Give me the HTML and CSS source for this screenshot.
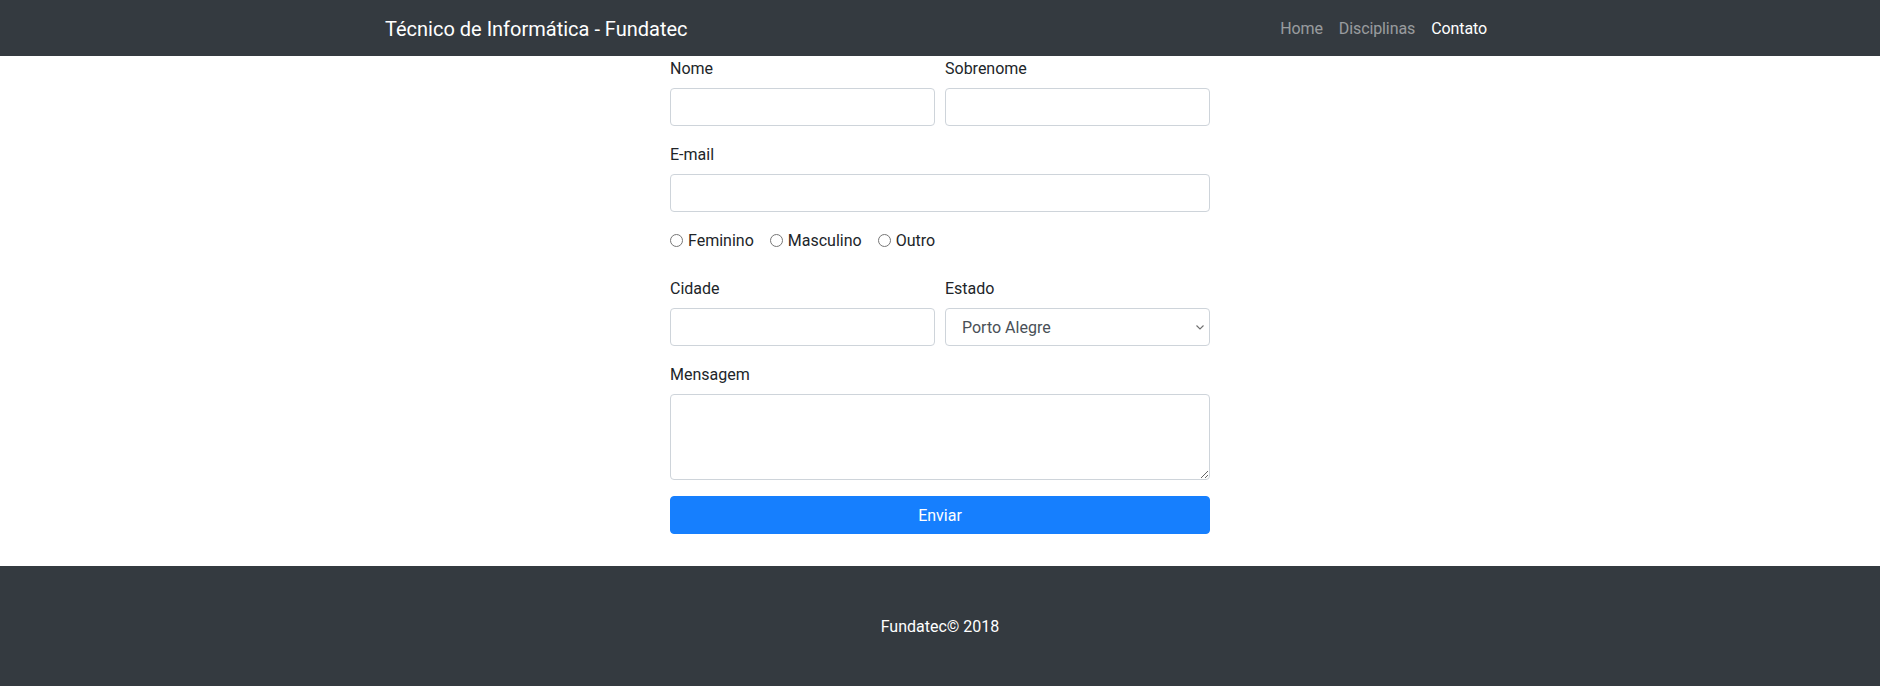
FILE: index.html
```html
<!DOCTYPE html>
<html lang="pt-BR">
<head>
<meta charset="utf-8">
<title>Contato - Técnico de Informática - Fundatec</title>
<link rel="stylesheet" href="styles.css">
</head>
<body>
<nav class="navbar">
  <div class="container nav-inner">
    <a class="brand" href="#">Técnico de Informática - Fundatec</a>
    <ul class="nav-links">
      <li><a class="nav-link" href="#">Home</a></li>
      <li><a class="nav-link" href="#">Disciplinas</a></li>
      <li><a class="nav-link active" href="#">Contato</a></li>
    </ul>
  </div>
</nav>
<main class="container">
  <form class="contact-form">
    <div class="form-row">
      <div class="form-group">
        <label for="nome">Nome</label>
        <input class="form-control" id="nome" type="text">
      </div>
      <div class="form-group">
        <label for="sobrenome">Sobrenome</label>
        <input class="form-control" id="sobrenome" type="text">
      </div>
    </div>
    <div class="form-group">
      <label for="email">E-mail</label>
      <input class="form-control" id="email" type="email">
    </div>
    <div class="radio-row">
      <label class="form-check"><input type="radio" name="sexo" class="radio">Feminino</label>
      <label class="form-check"><input type="radio" name="sexo" class="radio">Masculino</label>
      <label class="form-check"><input type="radio" name="sexo" class="radio">Outro</label>
    </div>
    <div class="form-row">
      <div class="form-group">
        <label for="cidade">Cidade</label>
        <input class="form-control" id="cidade" type="text">
      </div>
      <div class="form-group">
        <label for="estado">Estado</label>
        <select class="form-control select" id="estado">
          <option>Porto Alegre</option>
        </select>
      </div>
    </div>
    <div class="form-group">
      <label for="mensagem">Mensagem</label>
      <textarea class="form-control textarea" id="mensagem" rows="3"></textarea>
    </div>
    <button class="btn-primary" type="submit">Enviar</button>
  </form>
</main>
<footer class="footer">
  <p>Fundatec© 2018</p>
</footer>
</body>
</html>
```

FILE: styles.css
```css
* { box-sizing: border-box; }

html, body {
  margin: 0;
  padding: 0;
}

body {
  font-family: Roboto, "Liberation Sans", Arial, sans-serif;
  font-size: 16px;
  line-height: 1.5;
  color: #212529;
  background: #fff;
}

.container {
  width: 1140px;
  margin: 0 auto;
  padding: 0 15px;
}

/* Navbar */
.navbar {
  background: #343a40;
  padding: 8px 0;
  height: 56px;
}

.nav-inner {
  display: flex;
  align-items: center;
  justify-content: space-between;
  height: 40px;
}

.brand {
  color: #fff;
  font-size: 20px;
  line-height: 30px;
  text-decoration: none;
  padding: 6px 0 4px;
}

.nav-links {
  list-style: none;
  margin: 0;
  padding: 0;
  display: flex;
}

.nav-link {
  display: block;
  padding: 9px 8px 7px;
  color: rgba(255, 255, 255, 0.5);
  text-decoration: none;
  line-height: 24px;
  letter-spacing: -0.1px;
}

.nav-link.active { color: #fff; }

/* Form */
.contact-form {
  width: 540px;
  margin: 0 auto;
  padding-bottom: 32px;
}

.form-row {
  display: grid;
  grid-template-columns: 1fr 1fr;
  column-gap: 10px;
}

.form-group {
  margin-bottom: 16px;
}

.form-group label {
  display: block;
  padding-top: 1px;
  margin-bottom: 7px;
  line-height: 24px;
}

.form-control {
  display: block;
  width: 100%;
  height: 38px;
  padding: 6px 12px;
  font-family: inherit;
  font-size: 16px;
  line-height: 24px;
  color: #495057;
  background: #fff;
  border: 1px solid #ced4da;
  border-radius: 4px;
  margin: 0;
}

.select {
  -webkit-appearance: none;
  appearance: none;
  padding: 7px 28px 5px 16px;
  background-image: url("data:image/svg+xml,%3Csvg xmlns='http://www.w3.org/2000/svg' width='8' height='5' viewBox='0 0 8 5'%3E%3Cpath d='M0.5 0.5 L4 4 L7.5 0.5' fill='none' stroke='%23707070' stroke-width='1.1'/%3E%3C/svg%3E");
  background-repeat: no-repeat;
  background-position: right 5px center;
  background-size: 8px 5px;
}

.textarea {
  height: 86px;
  resize: vertical;
}

.radio-row {
  display: flex;
  align-items: center;
  height: 24px;
  margin-bottom: 24px;
  padding-top: 1px;
}

.form-check {
  display: inline-flex;
  align-items: center;
  margin-right: 16px;
  line-height: 24px;
}

.radio {
  width: 13px;
  height: 13px;
  margin: 0 5px 0 0;
}

.btn-primary {
  display: block;
  width: 100%;
  height: 38px;
  padding: 7px 12px 5px;
  font-family: inherit;
  font-size: 16px;
  line-height: 24px;
  color: #fff;
  background: #167ffe;
  border: 1px solid #167ffe;
  border-radius: 4px;
  cursor: pointer;
}

/* Footer */
.footer {
  background: #343a40;
  color: #fff;
  text-align: center;
  padding: 49px 0 47px;
}

.footer p {
  margin: 0;
  line-height: 24px;
}
```
